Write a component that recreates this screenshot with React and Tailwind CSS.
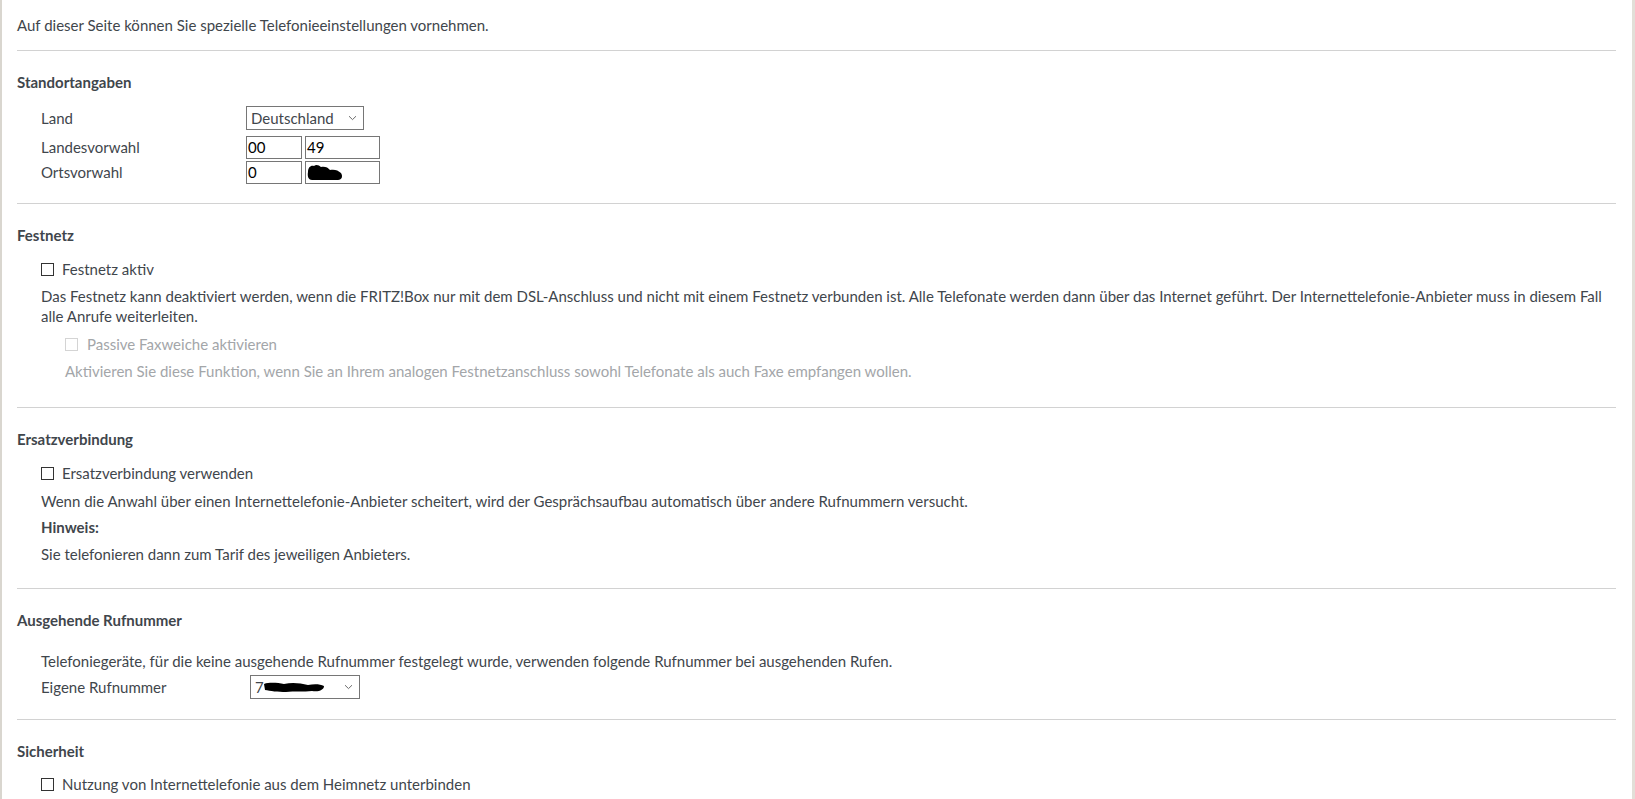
import React from "react";

function Chevron() {
  return (
    <svg width="9" height="6" viewBox="0 0 9 6" className="shrink-0">
      <path d="M1 1.2 L4.5 4.6 L8 1.2" fill="none" stroke="#6b6b6b" strokeWidth="1" />
    </svg>
  );
}

function Checkbox({ disabled }) {
  return (
    <span
      className={
        disabled
          ? "inline-block h-[13px] w-[13px] shrink-0 border border-[#d4d4d4] bg-white"
          : "inline-block h-[13px] w-[13px] shrink-0 border-[1.5px] border-[#333333] bg-white"
      }
    />
  );
}

function Blob({ width, height, d }) {
  return (
    <svg width={width} height={height} viewBox={`0 0 ${width} ${height}`} className="shrink-0">
      <path d={d} fill="#000" />
    </svg>
  );
}

function Section({ title, children, last }) {
  return (
    <div>
      <div className="mt-[21px] font-bold leading-[20px]">{title}</div>
      {children}
      {!last && <div className="h-px bg-[#d2d2d2]" />}
    </div>
  );
}

export default function App() {
  return (
    <div className="flex h-[799px] overflow-hidden bg-white font-['Lato',sans-serif] text-[15px] text-[#3f464c]">
      <div className="w-[2px] shrink-0 bg-[#d9d6cf]" />
      <div className="min-w-0 flex-1 pl-[15px] pr-[16px]">
        <p className="pt-[15px] leading-[20px]">
          Auf dieser Seite können Sie spezielle Telefonieeinstellungen vornehmen.
        </p>
        <div className="mt-[15px] h-px bg-[#d2d2d2]" />

        <Section title="Standortangaben">
          <div className="mt-[14px] pl-[24px]">
            <div className="flex h-[24px] items-center">
              <span className="w-[205px]">Land</span>
              <div className="flex h-[24px] w-[118px] items-center justify-between border border-[#767676] pl-[4px] pr-[6px]">
                <span>Deutschland</span>
                <Chevron />
              </div>
            </div>
            <div className="mt-[6px] flex h-[23px] items-center">
              <span className="w-[205px]">Landesvorwahl</span>
              <div className="flex h-[23px] w-[56px] items-center border border-[#767676] pl-px text-black">00</div>
              <div className="ml-[3px] flex h-[23px] w-[75px] items-center border border-[#767676] pl-px text-black">49</div>
            </div>
            <div className="mt-[2px] flex h-[23px] items-center">
              <span className="w-[205px]">Ortsvorwahl</span>
              <div className="flex h-[23px] w-[56px] items-center border border-[#767676] pl-px text-black">0</div>
              <div className="ml-[3px] flex h-[23px] w-[75px] items-center border border-[#767676] pl-px text-black">
                <Blob
                  width={36}
                  height={17}
                  d="M1 8 C1 3 4 1 7 2 C9 0 12 1 14 3 C17 2 21 3 23 6 C27 5 31 6 34 9 C36 12 35 16 31 16 L5 16 C2 16 0 13 1 8 Z"
                />
              </div>
            </div>
          </div>
          <div className="mt-[19px]" />
        </Section>

        <Section title="Festnetz">
          <div className="mt-[14px] pl-[24px]">
            <label className="flex h-[20px] items-center gap-[8px]">
              <Checkbox />
              <span>Festnetz aktiv</span>
            </label>
            <p className="mt-[7px] leading-[20px]">
              Das Festnetz kann deaktiviert werden, wenn die FRITZ!Box nur mit dem DSL-Anschluss und nicht mit einem Festnetz verbunden ist. Alle Telefonate werden dann über das Internet geführt. Der Internettelefonie-Anbieter muss in diesem Fall alle Anrufe weiterleiten.
            </p>
            <div className="pl-[24px] text-[#a3a6a9]">
              <label className="mt-[8px] flex h-[20px] items-center gap-[9px]">
                <Checkbox disabled />
                <span>Passive Faxweiche aktivieren</span>
              </label>
              <p className="mt-[7px] leading-[20px]">
                Aktivieren Sie diese Funktion, wenn Sie an Ihrem analogen Festnetzanschluss sowohl Telefonate als auch Faxe empfangen wollen.
              </p>
            </div>
          </div>
          <div className="mt-[26px]" />
        </Section>

        <Section title="Ersatzverbindung">
          <div className="mt-[14px] pl-[24px]">
            <label className="flex h-[20px] items-center gap-[8px]">
              <Checkbox />
              <span>Ersatzverbindung verwenden</span>
            </label>
            <p className="mt-[8px] leading-[20px]">
              Wenn die Anwahl über einen Internettelefonie-Anbieter scheitert, wird der Gesprächsaufbau automatisch über andere Rufnummern versucht.
            </p>
            <p className="mt-[6px] font-bold leading-[20px]">Hinweis:</p>
            <p className="mt-[7px] leading-[20px]">Sie telefonieren dann zum Tarif des jeweiligen Anbieters.</p>
          </div>
          <div className="mt-[24px]" />
        </Section>

        <Section title="Ausgehende Rufnummer">
          <div className="mt-[21px] pl-[24px]">
            <p className="leading-[20px]">
              Telefoniegeräte, für die keine ausgehende Rufnummer festgelegt wurde, verwenden folgende Rufnummer bei ausgehenden Rufen.
            </p>
            <div className="mt-[4px] flex h-[24px] items-center">
              <span className="w-[209px]">Eigene Rufnummer</span>
              <div className="flex h-[24px] w-[110px] items-center justify-between border border-[#767676] pl-[4px] pr-[6px]">
                <span className="flex items-center">
                  <span>7</span>
                  <Blob
                    width={60}
                    height={10}
                    d="M0 2 C6 0 14 1 20 2 C28 0 36 1 44 3 C50 2 56 2 60 4 C60 8 55 10 48 9 C40 10 30 9 22 10 C14 10 6 9 1 8 Z"
                  />
                </span>
                <Chevron />
              </div>
            </div>
          </div>
          <div className="mt-[20px]" />
        </Section>

        <Section title="Sicherheit" last>
          <div className="mt-[13px] pl-[24px]">
            <label className="flex h-[20px] items-center gap-[8px]">
              <Checkbox />
              <span>Nutzung von Internettelefonie aus dem Heimnetz unterbinden</span>
            </label>
          </div>
        </Section>
      </div>
      <div className="w-[3px] shrink-0 bg-[#e2dfd8]" />
    </div>
  );
}
